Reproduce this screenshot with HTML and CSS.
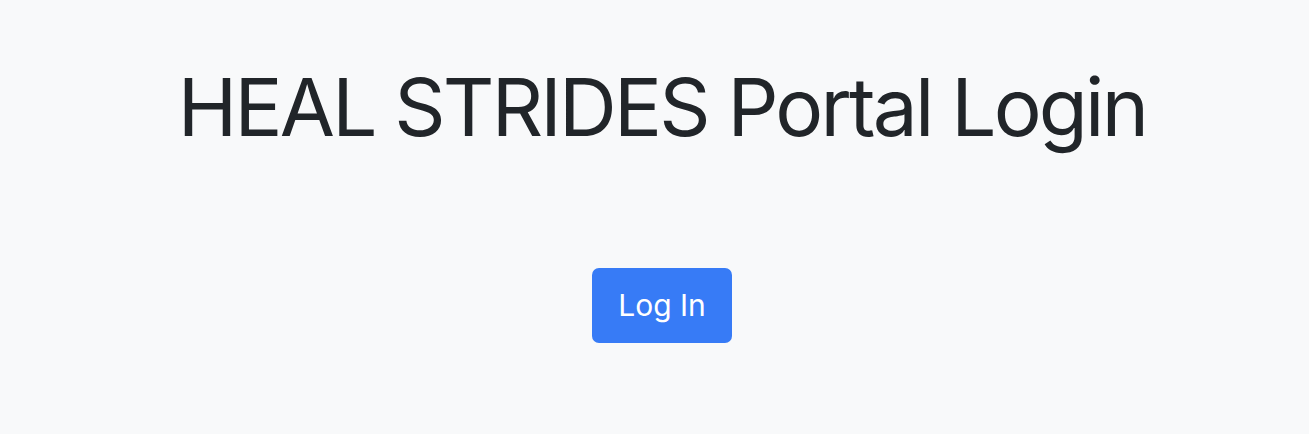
FILE: index.html
```html
<!DOCTYPE html>
<html lang="en">
<head>
<meta charset="utf-8">
<title>HEAL STRIDES Portal Login</title>
<link rel="stylesheet" href="styles.css">
</head>
<body>
<main class="login">
  <h1 class="title">HEAL STRIDES Portal Login</h1>
  <button class="btn-login" type="button">Log In</button>
</main>
</body>
</html>
```
FILE: styles.css
```css
html, body {
  margin: 0;
  padding: 0;
  background: #f8f9fa;
  height: 100%;
}
body {
  font-family: Inter, "Noto Sans", sans-serif;
  color: #212529;
}
.login {
  display: flex;
  flex-direction: column;
  align-items: center;
  padding-top: 59px;
  padding-left: 15px;
}
.title {
  margin: 0;
  font-size: 80px;
  font-weight: 400;
  line-height: 96px;
  letter-spacing: -2.8px;
}
.btn-login {
  margin-top: 113px;
  font-family: Inter, "Noto Sans", sans-serif;
  font-size: 30px;
  line-height: 45px;
  padding: 15px 26px;
  color: #fff;
  background: #377bf6;
  border: 0;
  border-radius: 7px;
  cursor: pointer;
}
```
